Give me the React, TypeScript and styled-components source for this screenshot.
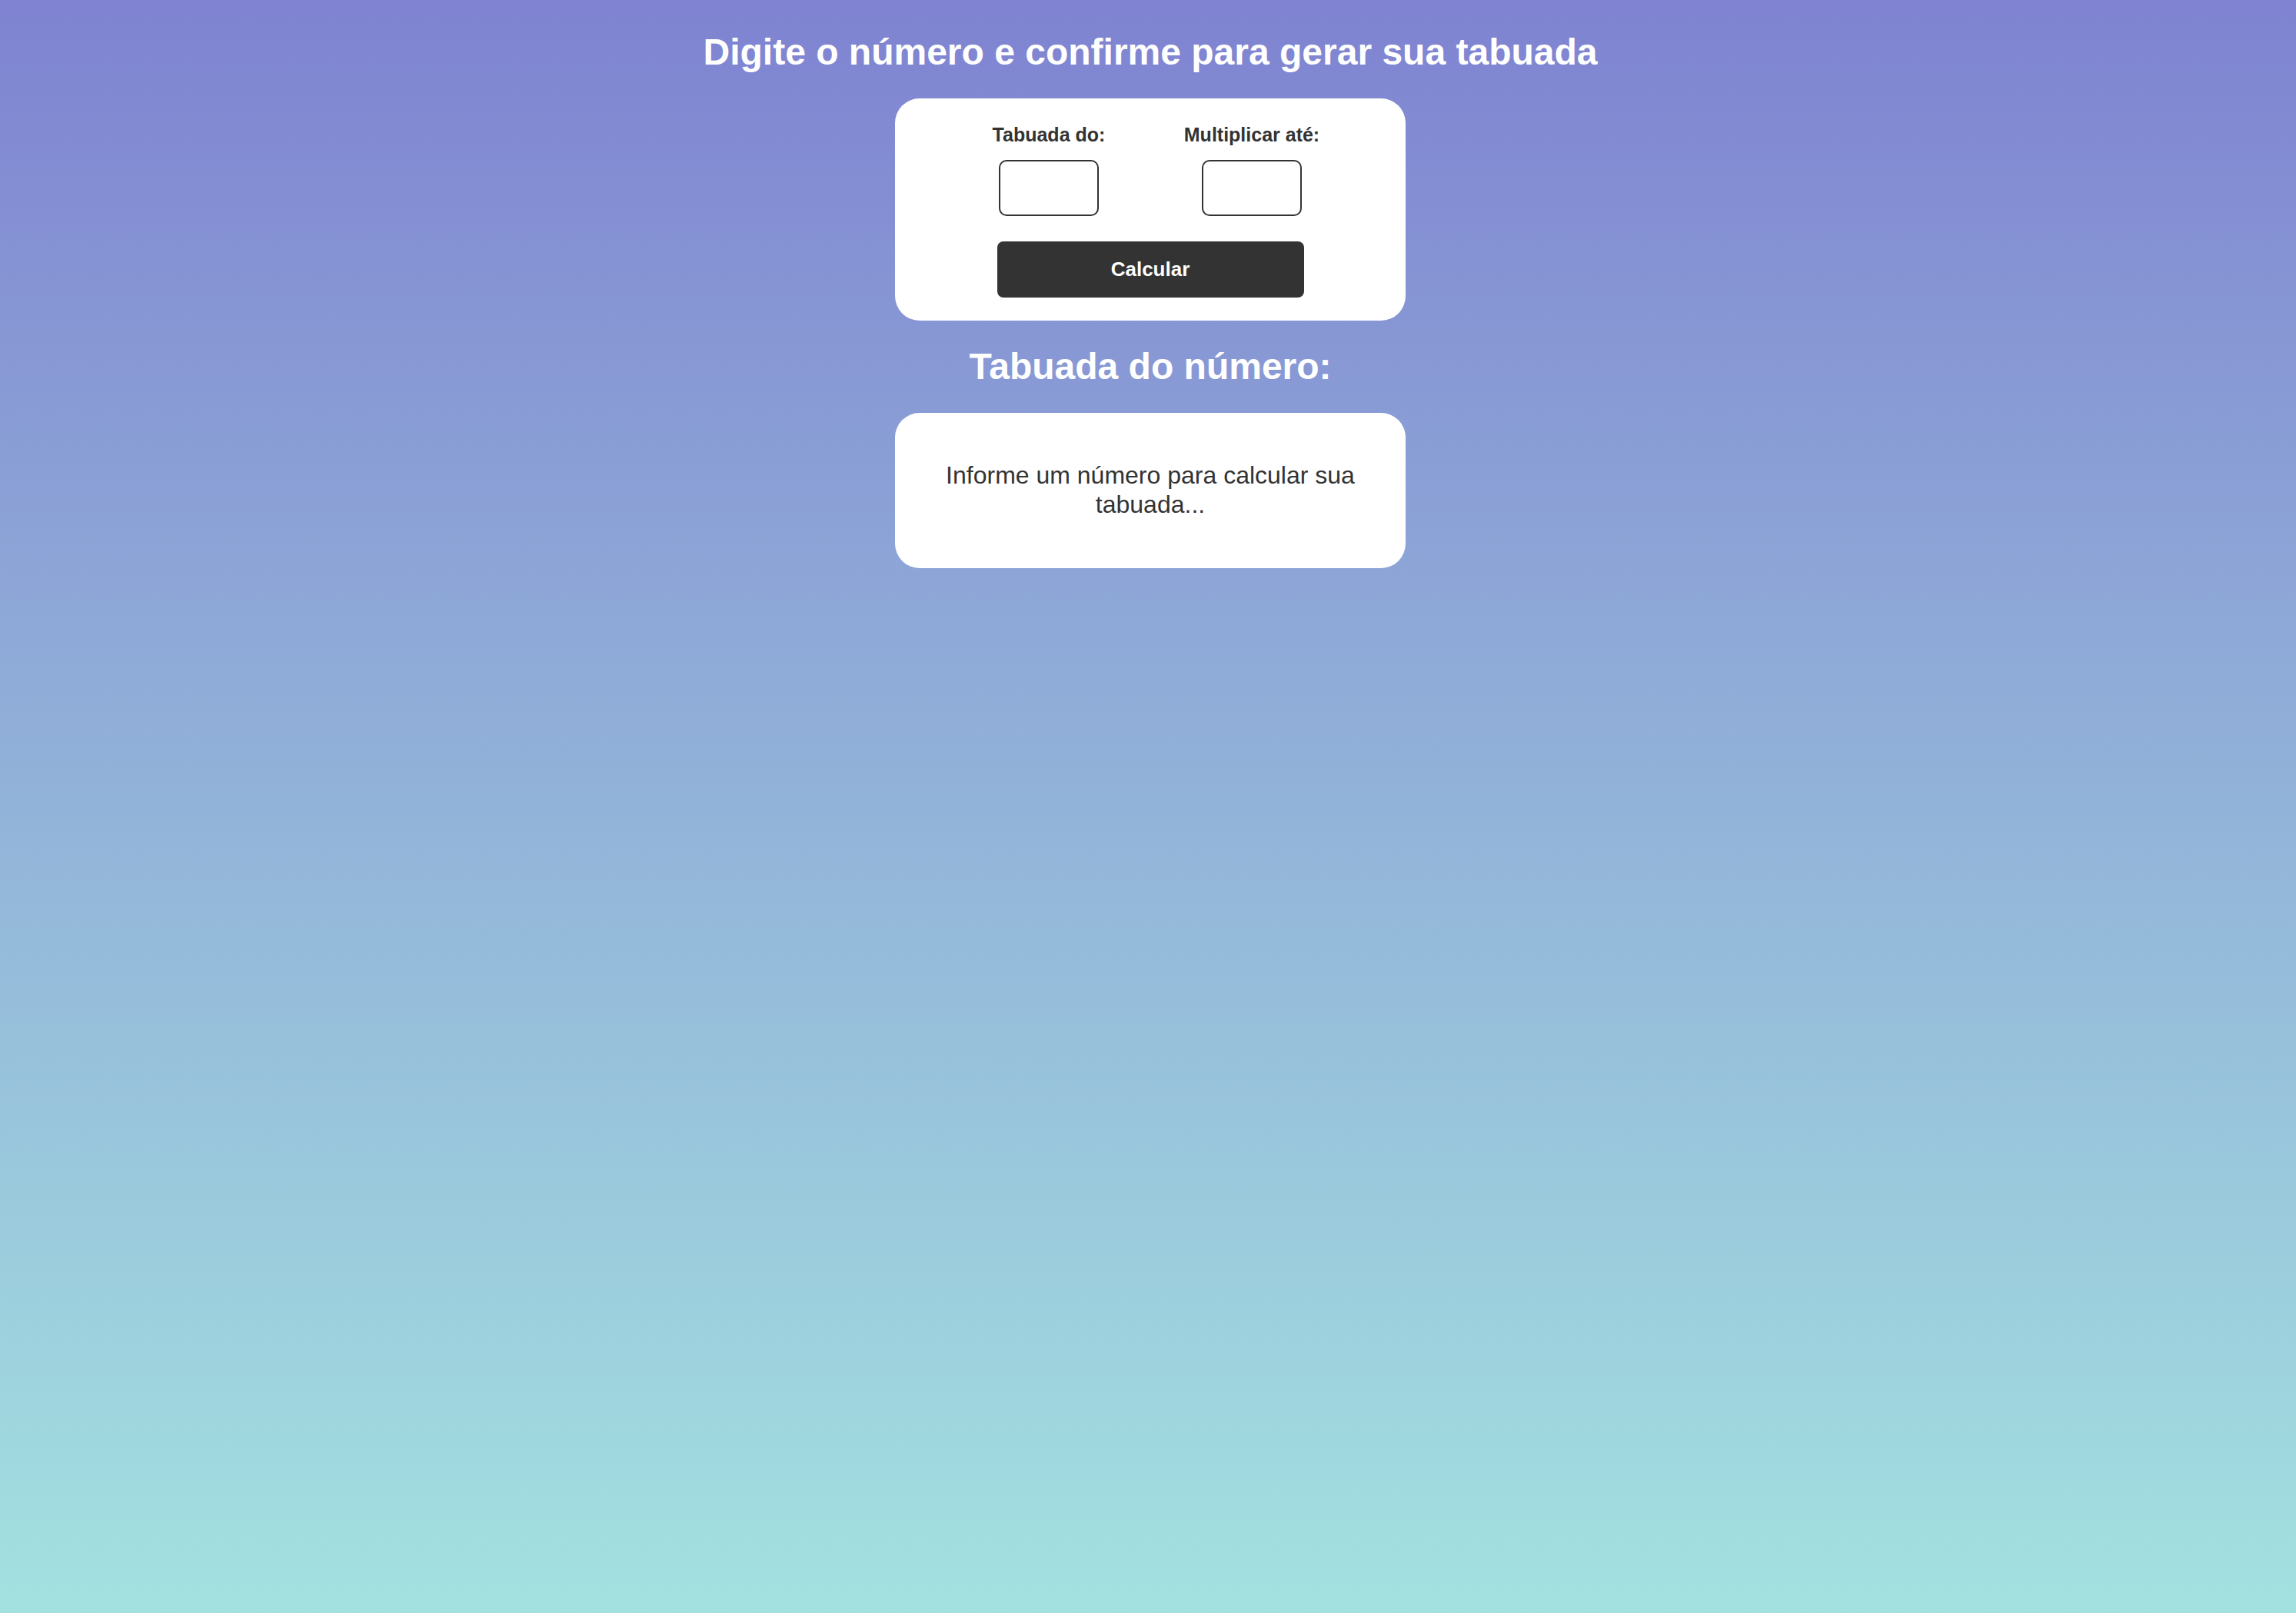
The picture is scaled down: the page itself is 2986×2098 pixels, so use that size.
import React, { useState } from "react";
import styled, { createGlobalStyle } from "styled-components";

const GlobalStyle = createGlobalStyle`
  html, body {
    margin: 0;
    padding: 0;
  }
  body {
    min-height: 100vh;
    font-family: "Liberation Sans", Arial, Helvetica, sans-serif;
    background: linear-gradient(180deg, #7f83d1 0%, #92b3d9 50%, #a3e1e0 100%);
    background-attachment: fixed;
  }
  * { box-sizing: border-box; }
`;

const Page = styled.main`
  min-height: 100vh;
  display: flex;
  flex-direction: column;
  align-items: center;
  padding: 40px 0 0 6px;
  gap: 32px;
`;

const Title = styled.h1`
  margin: 0;
  font-size: 48px;
  line-height: 56px;
  font-weight: 700;
  color: #ffffff;
  text-align: center;
`;

const Card = styled.section<{ $pad: string }>`
  width: 664px;
  background: #ffffff;
  border-radius: 32px;
  padding: ${(p) => p.$pad};
  display: flex;
  flex-direction: column;
  align-items: center;
`;

const Fields = styled.div`
  display: grid;
  grid-template-columns: 200px 200px;
  column-gap: 64px;
  justify-content: center;
`;

const Field = styled.label`
  display: flex;
  flex-direction: column;
  align-items: center;
  gap: 18px;
`;

const FieldLabel = styled.span`
  font-size: 25px;
  line-height: 30px;
  font-weight: 700;
  color: #333333;
  white-space: nowrap;
`;

const NumberInput = styled.input`
  width: 130px;
  height: 73px;
  border: 2px solid #333333;
  border-radius: 10px;
  background: #ffffff;
  font-family: inherit;
  font-size: 26px;
  text-align: center;
  color: #333333;
  outline: none;
  padding: 0 8px;
`;

const Button = styled.button`
  margin-top: 33px;
  width: 399px;
  height: 73px;
  border: none;
  border-radius: 8px;
  background: #333333;
  color: #ffffff;
  font-family: inherit;
  font-size: 26px;
  font-weight: 700;
  cursor: pointer;
`;

const Message = styled.p`
  margin: 32px 0;
  font-size: 32px;
  line-height: 1.2;
  color: #333333;
  text-align: center;
`;

const ResultList = styled.ul`
  margin: 32px 0;
  padding: 0;
  list-style: none;
  font-size: 32px;
  line-height: 1.4;
  color: #333333;
  text-align: center;
`;

export default function App() {
  const [base, setBase] = useState("");
  const [limit, setLimit] = useState("");
  const [rows, setRows] = useState<string[] | null>(null);

  const calc = () => {
    const n = Number(base);
    const m = Number(limit);
    if (!base || isNaN(n) || !limit || isNaN(m) || m < 1) {
      setRows(null);
      return;
    }
    const out: string[] = [];
    for (let i = 1; i <= m; i++) out.push(`${n} x ${i} = ${n * i}`);
    setRows(out);
  };

  return (
    <>
      <GlobalStyle />
      <Page>
        <Title>Digite o número e confirme para gerar sua tabuada</Title>
        <Card $pad="32px 32px 30px">
          <Fields>
            <Field>
              <FieldLabel>Tabuada do:</FieldLabel>
              <NumberInput
                type="text"
                value={base}
                onChange={(e) => setBase(e.target.value)}
              />
            </Field>
            <Field>
              <FieldLabel>Multiplicar até:</FieldLabel>
              <NumberInput
                type="text"
                value={limit}
                onChange={(e) => setLimit(e.target.value)}
              />
            </Field>
          </Fields>
          <Button type="button" onClick={calc}>
            Calcular
          </Button>
        </Card>
        <Title as="h2">Tabuada do número:</Title>
        <Card $pad="30px 32px 31px">
          {rows ? (
            <ResultList>
              {rows.map((r) => (
                <li key={r}>{r}</li>
              ))}
            </ResultList>
          ) : (
            <Message>Informe um número para calcular sua tabuada...</Message>
          )}
        </Card>
      </Page>
    </>
  );
}
